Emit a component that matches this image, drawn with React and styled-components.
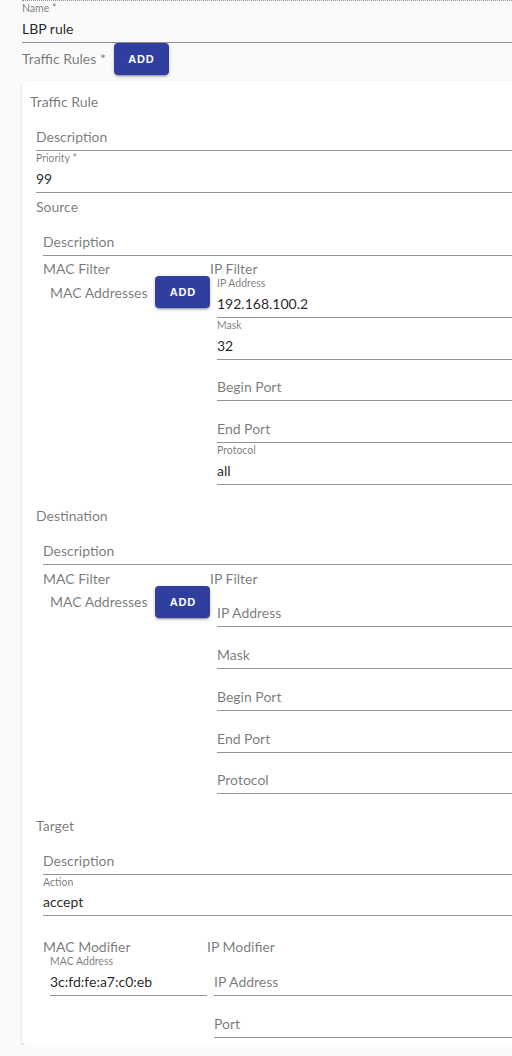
import React from 'react';
import styled, { createGlobalStyle } from 'styled-components';

const GlobalStyle = createGlobalStyle`
    html, body {
        margin: 0;
        padding: 0;
        overflow: hidden;
        background-color: #fafafa;
        font-family: Lato, "Noto Sans", sans-serif;
    }
`;

const Page = styled.div`
    width: 640px;
    padding-left: 22px;
`;

const TopRule = styled.div`
    border-top: 1px dotted #8f8f8f;
`;

const FieldBox = styled.div`
    display: flex;
    flex-direction: column;
    border-bottom: 1px solid rgba(0, 0, 0, 0.42);
`;

const Label = styled.div`
    height: 14.75px;
    line-height: 14.75px;
    font-size: 10.5px;
    color: rgba(0, 0, 0, 0.54);
    white-space: nowrap;
`;

const Input = styled.div`
    padding: 4px 0;
    height: 18px;
    line-height: 18px;
    font-size: 14px;
    white-space: nowrap;
    color: ${p => p.$empty ? 'rgba(0, 0, 0, 0.54)' : 'rgba(0, 0, 0, 0.87)'};
`;

const Heading = styled.div`
    height: 15px;
    line-height: 15px;
    font-size: 14px;
    color: rgba(0, 0, 0, 0.54);
    margin-top: ${p => p.$top || 0}px;
    white-space: nowrap;
`;

const AddRow = styled.div`
    display: flex;
    align-items: center;
    gap: 8px;
    height: 32px;
    padding-left: ${p => p.$indent || 0}px;
`;

const RowText = styled.span`
    font-size: 14px;
    color: rgba(0, 0, 0, 0.54);
    white-space: nowrap;
`;

const AddButton = styled.button`
    flex: 0 0 55px;
    height: 32px;
    border: none;
    border-radius: 4px;
    background-color: #303f9f;
    color: #fff;
    font-family: "Liberation Sans", Arial, sans-serif;
    font-weight: 700;
    font-size: 11px;
    letter-spacing: 0.8px;
    padding: 0;
    box-shadow: 0 3px 1px -2px rgba(0,0,0,.2), 0 2px 2px 0 rgba(0,0,0,.14), 0 1px 5px 0 rgba(0,0,0,.12);
`;

const Card = styled.div`
    margin-top: 6.5px;
    background-color: #fff;
    border-radius: 4px;
    padding: 13px 0 7px 8px;
    box-shadow: 0 2px 1px -1px rgba(0,0,0,.2), 0 1px 1px 0 rgba(0,0,0,.14), 0 1px 3px 0 rgba(0,0,0,.12);
`;

const Body = styled.div`
    padding-left: ${p => p.$indent}px;
    padding-bottom: ${p => p.$bottom || 0}px;
`;

const Columns = styled.div`
    display: flex;
    margin-top: ${p => p.$top || 0}px;
`;

const Column = styled.div`
    flex: ${p => p.$width ? `0 0 ${p.$width}px` : '1'};
    min-width: 0;
    display: flex;
    flex-direction: column;
`;

const Field = ({ label, value }) => (
    <FieldBox>
        <Label>{value ? label : ''}</Label>
        {value
            ? <Input>{value}</Input>
            : <Input $empty>{label}</Input>}
    </FieldBox>
);

const FilterSection = ({ title, ip }) => (
    <>
        <Heading $top={6}>{title}</Heading>
        <Body $indent={7} $bottom={17.5}>
            <Field label="Description" />
            <Columns $top={5.5}>
                <Column $width={167}>
                    <Heading>MAC Filter</Heading>
                    <AddRow $indent={7}>
                        <RowText>MAC Addresses</RowText>
                        <AddButton>ADD</AddButton>
                    </AddRow>
                </Column>
                <Column>
                    <Heading>IP Filter</Heading>
                    <Body $indent={7}>
                        <Field label="IP Address" value={ip.address} />
                        <Field label="Mask" value={ip.mask} />
                        <Field label="Begin Port" />
                        <Field label="End Port" />
                        <Field label="Protocol" value={ip.protocol} />
                    </Body>
                </Column>
            </Columns>
        </Body>
    </>
);

const App = () => {
    return (
        <Page>
            <GlobalStyle />
            <TopRule />
            <Field label="Name *" value="LBP rule" />
            <AddRow>
                <RowText>Traffic Rules *</RowText>
                <AddButton>ADD</AddButton>
            </AddRow>
            <Card>
                <Heading>Traffic Rule</Heading>
                <Body $indent={6}>
                    <Field label="Description" />
                    <Field label="Priority *" value="99" />

                    <FilterSection
                        title="Source"
                        ip={{ address: '192.168.100.2', mask: '32', protocol: 'all' }}
                    />
                    <FilterSection title="Destination" ip={{}} />

                    <Heading $top={6}>Target</Heading>
                    <Body $indent={7}>
                        <Field label="Description" />
                        <Field label="Action" value="accept" />
                        <Columns $top={23}>
                            <Column $width={164}>
                                <Heading>MAC Modifier</Heading>
                                <Body $indent={7}>
                                    <Field label="MAC Address" value="3c:fd:fe:a7:c0:eb" />
                                </Body>
                            </Column>
                            <Column>
                                <Heading>IP Modifier</Heading>
                                <Body $indent={7}>
                                    <Field label="IP Address" />
                                    <Field label="Port" />
                                </Body>
                            </Column>
                        </Columns>
                    </Body>
                </Body>
            </Card>
        </Page>
    );
};

export default App;
